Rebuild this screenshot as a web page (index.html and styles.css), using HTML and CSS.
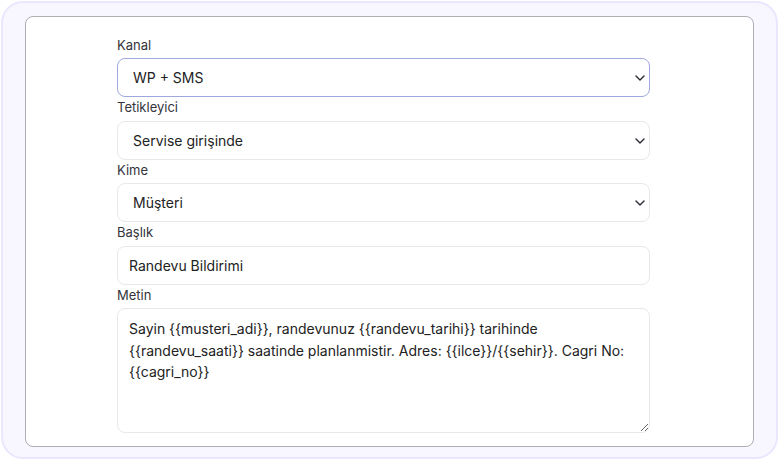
FILE: index.html
```html
<!DOCTYPE html>
<html lang="tr">
<head>
    <meta charset="UTF-8">
    <meta name="viewport" content="width=device-width, initial-scale=1.0">
    <title>Bildirim Şablonu</title>
    <link rel="stylesheet" href="styles.css">
</head>
<body>
    <div class="frame">
        <div class="card">
            <form class="template-form">
                <label class="field-label" for="kanal">Kanal</label>
                <div class="select-wrap">
                    <select id="kanal" class="field-control is-focused">
                        <option>WP + SMS</option>
                        <option>WP</option>
                        <option>SMS</option>
                    </select>
                    <svg class="chevron" width="10" height="6" viewBox="0 0 10 6"><path d="M1 1l4 4 4-4" fill="none" stroke="#2a2a33" stroke-width="1.4" stroke-linecap="round" stroke-linejoin="round"/></svg>
                </div>

                <label class="field-label" for="tetikleyici">Tetikleyici</label>
                <div class="select-wrap">
                    <select id="tetikleyici" class="field-control">
                        <option>Servise girişinde</option>
                    </select>
                    <svg class="chevron" width="10" height="6" viewBox="0 0 10 6"><path d="M1 1l4 4 4-4" fill="none" stroke="#2a2a33" stroke-width="1.4" stroke-linecap="round" stroke-linejoin="round"/></svg>
                </div>

                <label class="field-label" for="kime">Kime</label>
                <div class="select-wrap">
                    <select id="kime" class="field-control">
                        <option>Müşteri</option>
                    </select>
                    <svg class="chevron" width="10" height="6" viewBox="0 0 10 6"><path d="M1 1l4 4 4-4" fill="none" stroke="#2a2a33" stroke-width="1.4" stroke-linecap="round" stroke-linejoin="round"/></svg>
                </div>

                <label class="field-label" for="baslik">Başlık</label>
                <input id="baslik" class="field-control field-input" type="text" value="Randevu Bildirimi">

                <label class="field-label" for="metin">Metin</label>
                <textarea id="metin" class="field-control field-textarea">Sayin {{musteri_adi}}, randevunuz {{randevu_tarihi}} tarihinde {{randevu_saati}} saatinde planlanmistir. Adres: {{ilce}}/{{sehir}}. Cagri No: {{cagri_no}}</textarea>
            </form>
        </div>
    </div>
</body>
</html>
```

FILE: styles.css
```css
* {
    box-sizing: border-box;
}

html, body {
    margin: 0;
    background: #fff;
}

body {
    font-family: 'Inter', 'Noto Sans', sans-serif;
    color: #222;
}

.frame {
    width: 777px;
    height: 458px;
    margin: 1px 0 0 1px;
    padding: 13px 22px 0 22px;
    background: #f8f6ff;
    border: 2px solid #ebe6fd;
    border-radius: 22px;
}

.card {
    height: 431px;
    padding: 17.5px 0 0 91px;
    background: #fff;
    border: 1px solid #aeaeb3;
    border-radius: 8px;
}

.template-form {
    display: flex;
    flex-direction: column;
    width: 533px;
}

.field-label {
    font-size: 13px;
    line-height: 20px;
    margin-bottom: 3.5px;
    color: #34343c;
}

.field-control {
    display: block;
    height: 39px;
    width: 100%;
    font-family: inherit;
    font-size: 14px;
    color: #222;
    background: #fff;
    border: 1px solid #e8e8ea;
    border-radius: 8px;
    outline: none;
}

.select-wrap {
    position: relative;
}

select.field-control {
    appearance: none;
    -webkit-appearance: none;
    padding: 0 30px 0 15px;
}

.chevron {
    position: absolute;
    right: 5px;
    top: 17px;
    pointer-events: none;
}

.is-focused {
    border: 1.5px solid #9fa8dc;
}

.field-input {
    padding: 0 11px;
}

.field-textarea {
    height: 125px;
    padding: 9px 11px 8px;
    line-height: 21.5px;
    resize: vertical;
}
```
